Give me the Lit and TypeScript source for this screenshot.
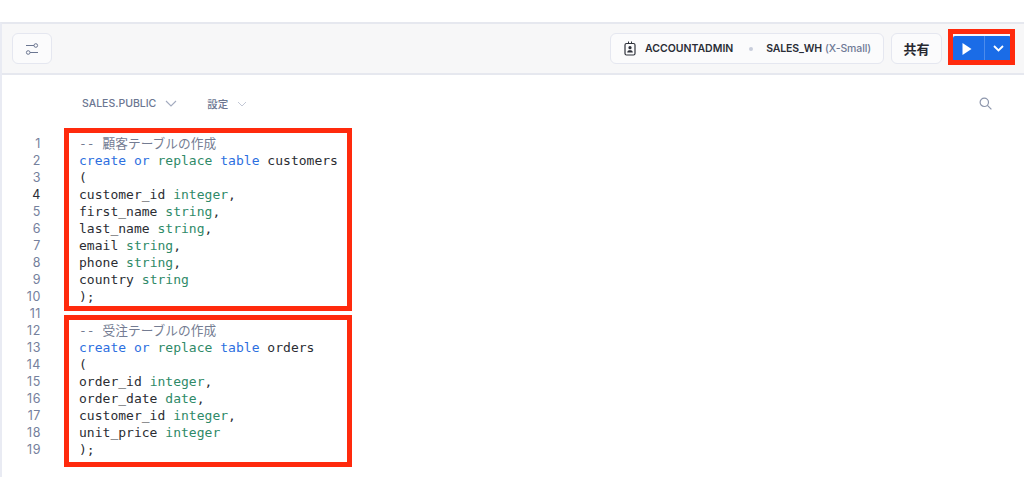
import { LitElement, html, css } from "lit";
import { customElement } from "lit/decorators.js";

type Tok = [string, string];
const K = "k", T = "t", C = "c", P = "p", J = "c cj";
const block1: Tok[][] = [
  [[C, "-- "], [J, "顧客テーブルの作成"]],
  [[K, "create or "], [T, "replace "], [K, "table "], [P, "customers"]],
  [[P, "("]],
  [[P, "customer_id "], [T, "integer"], [P, ","]],
  [[P, "first_name "], [T, "string"], [P, ","]],
  [[P, "last_name "], [T, "string"], [P, ","]],
  [[P, "email "], [T, "string"], [P, ","]],
  [[P, "phone "], [T, "string"], [P, ","]],
  [[P, "country "], [T, "string"]],
  [[P, ");"]],
];
const block2: Tok[][] = [
  [[C, "-- "], [J, "受注テーブルの作成"]],
  [[K, "create or "], [T, "replace "], [K, "table "], [P, "orders"]],
  [[P, "("]],
  [[P, "order_id "], [T, "integer"], [P, ","]],
  [[P, "order_date "], [T, "date"], [P, ","]],
  [[P, "customer_id "], [T, "integer"], [P, ","]],
  [[P, "unit_price "], [T, "integer"]],
  [[P, ");"]],
];
const lines: Tok[][] = [...block1, [[P, " "]], ...block2];

const chev = html`<svg class="chev" width="12" height="7" viewBox="0 0 12 7" fill="none"><path d="M1 1l5 5 5-5" stroke="currentColor" stroke-width="1.1"/></svg>`;
const chevSmall = html`<svg class="chev small" width="10" height="6" viewBox="0 0 10 6" fill="none"><path d="M1 1l4 4 4-4" stroke="currentColor" stroke-width="1"/></svg>`;

@customElement("app-root")
export class AppRoot extends LitElement {
  static styles = css`
    :host { display: block; width: 1024px; height: 477px; overflow: hidden; position: relative; background: #fff;
      font-family: Inter, "Noto Sans CJK JP", sans-serif; }
    .frame { margin-top: 22px; height: 455px; border-left: 2px solid #e9ebf3; border-top: 2px solid #e6e8ef; box-sizing: border-box; }
    .bar { height: 51px; box-sizing: border-box; background: #f7f7f8; border-bottom: 2px solid #e6e8ef;
      display: flex; align-items: center; padding: 0 13px 0 10px; }
    .btn { height: 31px; box-sizing: border-box; background: #fbfbfc; border: 1.5px solid #e5e7f0; border-radius: 6px;
      display: flex; align-items: center; justify-content: center; }
    .filter { width: 40px; }
    .spacer { flex: 1; }
    .chip { width: 274px; padding-left: 13px; justify-content: flex-start; font-size: 10.5px; font-weight: 600; color: #2a2d36; }
    .chip svg { margin-right: 9px; }
    .wh { letter-spacing: -0.15px; }
    .dot { width: 4px; height: 4px; border-radius: 50%; background: #c8cddb; margin: 0 13px 0 16px; }
    .dim { color: #6f7a96; font-weight: 500; margin-left: 3px; letter-spacing: -0.1px; }
    .share { width: 51px; margin-left: 7px; font-size: 13px; font-weight: 600; color: #26282f; }
    .run { margin-left: 11px; width: 58px; height: 26px; background: #1a6ce7; border-radius: 2px; display: flex; align-items: stretch; }
    .run > div { display: flex; align-items: center; justify-content: center; }
    .run .play { width: 32px; box-sizing: border-box; border-right: 1px solid #4c8bec; padding-right: 3px; }
    .run .more { flex: 1; }
    .sub { height: 56px; box-sizing: border-box; display: flex; align-items: center; padding: 1px 32px 0 80px;
      font-size: 10.5px; font-weight: 500; color: #6b7691; }
    .sub .chev { color: #a3abbf; margin-left: 9px; }
    .sub .set { margin-left: 30px; }
    .sub .small { color: #c3c8d6; }
    .editor { display: flex; font-family: "DejaVu Sans Mono", "Noto Sans CJK JP", monospace; font-size: 13px; line-height: 17px; margin-top: 4px; }
    .nums { width: 39px; text-align: right; color: #75809c; font-size: 12.5px; letter-spacing: 0.6px; font-family: Inter, sans-serif; }
    .nums .cur { color: #2a2d36; }
    .code { margin-left: 38px; white-space: pre; color: #2b2d33; letter-spacing: 0.02px; }
    .k { color: #2d6fe0; } .t { color: #2f8a68; } .c { color: #747c92; } .p { color: #2b2d33; }
    .cj { font-size: 12.7px; }
    .mark { position: absolute; box-sizing: border-box; border: 5px solid #ff2a0d; pointer-events: none; }
    .m1 { left: 64px; top: 128px; width: 288px; height: 183px; }
    .m2 { left: 64px; top: 315px; width: 288px; height: 152px; }
    .m3 { left: 948px; top: 29px; width: 67px; height: 36px; }
  `;

  render() {
    return html`
      <div class="frame">
        <div class="bar">
          <div class="btn filter">
            <svg width="14" height="14" viewBox="0 0 14 14" fill="none" stroke="#6b7691" stroke-width="1">
              <path d="M1 3.5h8"/><circle cx="10.8" cy="3.5" r="1.8"/><circle cx="3.2" cy="10.5" r="1.8"/><path d="M5 10.5h8"/>
            </svg>
          </div>
          <div class="spacer"></div>
          <div class="btn chip">
            <svg width="12" height="15" viewBox="0 0 12 15" fill="none">
              <rect x="1" y="2.5" width="10" height="11.5" rx="1.5" stroke="#2f323b" stroke-width="1.2"/>
              <path d="M4.5 0.5v2M7.5 0.5v2" stroke="#2f323b" stroke-width="1"/>
              <circle cx="6" cy="6.7" r="1.6" fill="#2f323b"/>
              <path d="M3.2 11.6c0-1.8 1.3-2.4 2.8-2.4s2.8.6 2.8 2.4z" fill="#2f323b"/>
            </svg>
            <span>ACCOUNTADMIN</span><i class="dot"></i><span class="wh">SALES_WH</span><span class="dim">(X-Small)</span>
          </div>
          <div class="btn share">共有</div>
          <div class="run">
            <div class="play"><svg width="10" height="12" viewBox="0 0 10 12"><path d="M.5 0v12l9-6z" fill="#fff"/></svg></div>
            <div class="more"><svg width="11" height="7" viewBox="0 0 11 7" fill="none"><path d="M1 1l4.5 4.5L10 1" stroke="#fff" stroke-width="1.8"/></svg></div>
          </div>
        </div>
        <div class="sub">
          <span>SALES.PUBLIC</span>${chev}
          <span class="set">設定</span>${chevSmall}
          <div class="spacer"></div>
          <svg width="13" height="13" viewBox="0 0 13 13" fill="none" stroke="#8c95ab" stroke-width="1.2"><circle cx="5.3" cy="5.3" r="4.2"/><path d="M8.4 8.4l4 4"/></svg>
        </div>
        <div class="editor">
          <div class="nums">${lines.map((_, i) => html`<div class=${i === 3 ? "cur" : ""}>${i + 1}</div>`)}</div>
          <div class="code">${lines.map((l) => html`<div>${l.map(([c, s]) => html`<span class=${c}>${s}</span>`)}</div>`)}</div>
        </div>
      </div>
      <div class="mark m1"></div>
      <div class="mark m2"></div>
      <div class="mark m3"></div>
    `;
  }
}
